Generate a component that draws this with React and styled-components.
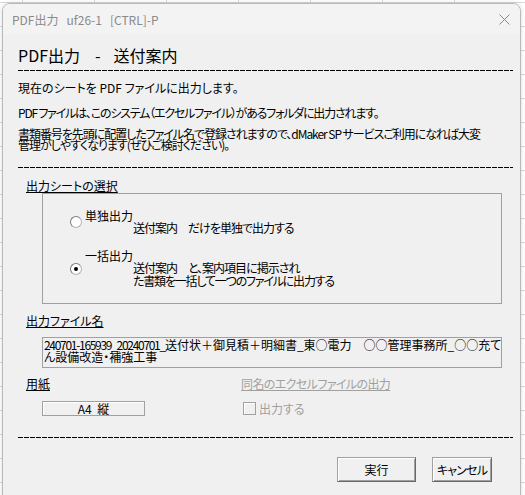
import React from 'react';
import styled, { createGlobalStyle } from 'styled-components';

const GlobalStyle = createGlobalStyle`
  html, body {
    margin: 0;
    padding: 0;
    overflow: hidden;
  }
  body {
    font-family: "Noto Sans CJK JP", "Liberation Sans", sans-serif;
    font-size: 12px;
    color: #000;
  }
`;

const Sheet = styled.div`
  width: 525px;
  height: 495px;
  overflow: hidden;
  box-sizing: border-box;
  padding: 3px 4px 0 2px;
  background-color: #fff;
  background-image: linear-gradient(to right, #d8d8d8 1px, transparent 1px),
    linear-gradient(to bottom, #d8d8d8 1px, transparent 1px);
  background-size: 72px 100%, 100% 24px;
  background-position: 22px 0, 0 2px;
`;

const Window = styled.div`
  width: 519px;
  height: 500px;
  box-sizing: border-box;
  border: 1px solid #b9b9b9;
  border-radius: 8px 8px 0 0;
  background: #f0f0f0;
  box-shadow: 0 0 4px rgba(0, 0, 0, 0.15);
  overflow: hidden;
  font-feature-settings: 'palt' 1;
`;

const TitleBar = styled.div`
  height: 30px;
  display: flex;
  align-items: center;
  justify-content: space-between;
  padding: 0 10px 0 9px;
  background: #f3f3f3;
`;

const TitleText = styled.span`
  color: #8a8a8a;
  font-size: 12px;
  white-space: pre;
`;

const Content = styled.div`
  padding: 11px 7px 0 15px;
`;

const Heading = styled.div`
  font-size: 16px;
  line-height: 20px;
  white-space: nowrap;
`;

const Sep = styled.span`
  margin: 0 13px 0 15px;
`;

const Dashes = styled.div`
  height: 1px;
  margin-top: ${p => p.$top}px;
  background: repeating-linear-gradient(to right, #000 0 5px, transparent 5px 6px);
`;

const Para = styled.p`
  margin: ${p => p.$top}px 0 0;
  line-height: ${p => p.$lh ?? 14}px;
  letter-spacing: ${p => p.$ls ?? 0}px;
  white-space: nowrap;
`;

const Line = styled.span`
  display: block;
  letter-spacing: ${p => p.$ls ?? 0}px;
`;

const SectionLabel = styled.div`
  margin: ${p => p.$top}px 0 0 ${p => p.$left ?? 8}px;
  line-height: 14px;
  letter-spacing: ${p => p.$ls ?? 0}px;
  text-decoration: underline;
  text-underline-offset: 1px;
  color: ${p => (p.$disabled ? '#a0a0a0' : '#000')};
  white-space: nowrap;
`;

const GroupBox = styled.div`
  margin: 0 11px 0 24px;
  height: 111px;
  box-sizing: border-box;
  border: 1px solid #a0a0a0;
  padding: 16px 0 0 27px;
  display: flex;
  flex-direction: column;
  gap: 16px;
`;

const Option = styled.label`
  display: flex;
  align-items: center;
  gap: 3px;
`;

const Radio = styled.span`
  width: 12px;
  height: 12px;
  box-sizing: border-box;
  border-radius: 50%;
  border: 1px solid #b4b4b4;
  border-top-color: #7a7a7a;
  border-left-color: #7a7a7a;
  background: #fff;
  display: flex;
  align-items: center;
  justify-content: center;
  &::after {
    content: '';
    width: 4px;
    height: 4px;
    border-radius: 50%;
    background: ${p => (p.$checked ? '#000' : 'transparent')};
  }
`;

const OptionText = styled.div`
  display: flex;
  flex-direction: column;
  line-height: 12px;
`;

const SubText = styled.div`
  padding-left: 48px;
  line-height: ${p => p.$lh ?? 12}px;
  letter-spacing: ${p => p.$ls ?? 0}px;
  white-space: nowrap;
`;

const FileBox = styled.div`
  margin: 9px 11px 0 24px;
  height: 31px;
  box-sizing: border-box;
  border: 1px solid #a0a0a0;
  padding: 1px 0 0 1px;
  line-height: 12px;
  white-space: nowrap;
`;

const Digits = styled.span`
  letter-spacing: -1.3px;
`;

const OptionsRow = styled.div`
  display: flex;
  margin-top: 9px;
`;

const Column = styled.div`
  width: ${p => p.$width}px;
  display: flex;
  flex-direction: column;
`;

const PaperBox = styled.div`
  margin: 10px 0 0 24px;
  width: 103px;
  height: 15px;
  box-sizing: border-box;
  border: 1px solid #a0a0a0;
  box-shadow: inset 1px 1px #fff;
  text-align: center;
  line-height: 13px;
  white-space: pre;
`;

const CheckRow = styled.div`
  display: flex;
  align-items: center;
  gap: 3px;
  height: 13px;
  line-height: 13px;
  margin: 11px 0 0 2px;
  color: #a0a0a0;
`;

const CheckBox = styled.span`
  width: 13px;
  height: 13px;
  box-sizing: border-box;
  border: 1px solid #a0a0a0;
  box-shadow: inset 1px 1px #fff;
`;

const Buttons = styled.div`
  display: flex;
  justify-content: flex-end;
  gap: 16px;
  margin: 19px 21px 0 0;
`;

const Button = styled.button`
  width: ${p => p.$width}px;
  height: 25px;
  padding: 0;
  font-family: inherit;
  font-size: 12px;
  font-feature-settings: 'palt' 1;
  letter-spacing: ${p => p.$ls ?? 0}px;
  color: #000;
  background: #f0f0f0;
  border: 1px solid #a0a0a0;
  border-right-color: #696969;
  border-bottom-color: #696969;
  box-shadow: inset 1px 1px #fff, inset -1px -1px #a0a0a0;
`;

const CloseIcon = () => (
  <svg width="11" height="11" viewBox="0 0 11 11">
    <path d="M0.5 0.5 L10.5 10.5 M10.5 0.5 L0.5 10.5" stroke="#8a8a8a" strokeWidth="1" fill="none" />
  </svg>
);

export default function App() {
  return (
    <>
      <GlobalStyle />
      <Sheet>
        <Window>
          <TitleBar>
            <TitleText>{'PDF出力   uf26-1   [CTRL]-P'}</TitleText>
            <CloseIcon />
          </TitleBar>
          <Content>
            <Heading>
              PDF出力<Sep>-</Sep>送付案内
            </Heading>
            <Dashes $top={5} />
            <Para $top={10}>現在のシートを PDF ファイルに出力します。</Para>
            <Para $top={11} $ls={-1.2}>
              PDF ファイルは、このシステム（エクセルファイル）があるフォルダに出力されます。
            </Para>
            <Para $top={8} $lh={11}>
              <Line $ls={-1.05}>
                書類番号を先頭に配置したファイル名で登録されますので、dMaker SP サービスご利用になれば大変
              </Line>
              <Line $ls={-1}>管理がしやすくなります(ぜひご検討ください)。</Line>
            </Para>
            <Dashes $top={17} />
            <SectionLabel $top={11}>出力シートの選択</SectionLabel>
            <GroupBox>
              <Option>
                <Radio />
                <OptionText>
                  <span>単独出力</span>
                  <SubText $ls={-1}>送付案内　だけを単独で出力する</SubText>
                </OptionText>
              </Option>
              <Option>
                <Radio $checked />
                <OptionText>
                  <span>一括出力</span>
                  <SubText $ls={-1}>送付案内　と、案内項目に掲示され</SubText>
                  <SubText $lh={13} $ls={-1.2}>
                    た書類を一括して一つのファイルに出力する
                  </SubText>
                </OptionText>
              </Option>
            </GroupBox>
            <SectionLabel $top={10}>出力ファイル名</SectionLabel>
            <FileBox>
              <Digits>240701-165939_20240701_</Digits>
              送付状＋御見積＋明細書_東○電力　○○管理事務所_○○充て
              <br />
              ん設備改造・補強工事
            </FileBox>
            <OptionsRow>
              <Column $width={223}>
                <SectionLabel $top={0}>用紙</SectionLabel>
                <PaperBox>{'A4  縦'}</PaperBox>
              </Column>
              <Column $width={200}>
                <SectionLabel $top={0} $left={0} $ls={-0.6} $disabled>
                  同名のエクセルファイルの出力
                </SectionLabel>
                <CheckRow>
                  <CheckBox />
                  <span>出力する</span>
                </CheckRow>
              </Column>
            </OptionsRow>
            <Dashes $top={21} />
            <Buttons>
              <Button $width={79}>実行</Button>
              <Button $width={60} $ls={-0.8}>
                キャンセル
              </Button>
            </Buttons>
          </Content>
        </Window>
      </Sheet>
    </>
  );
}
